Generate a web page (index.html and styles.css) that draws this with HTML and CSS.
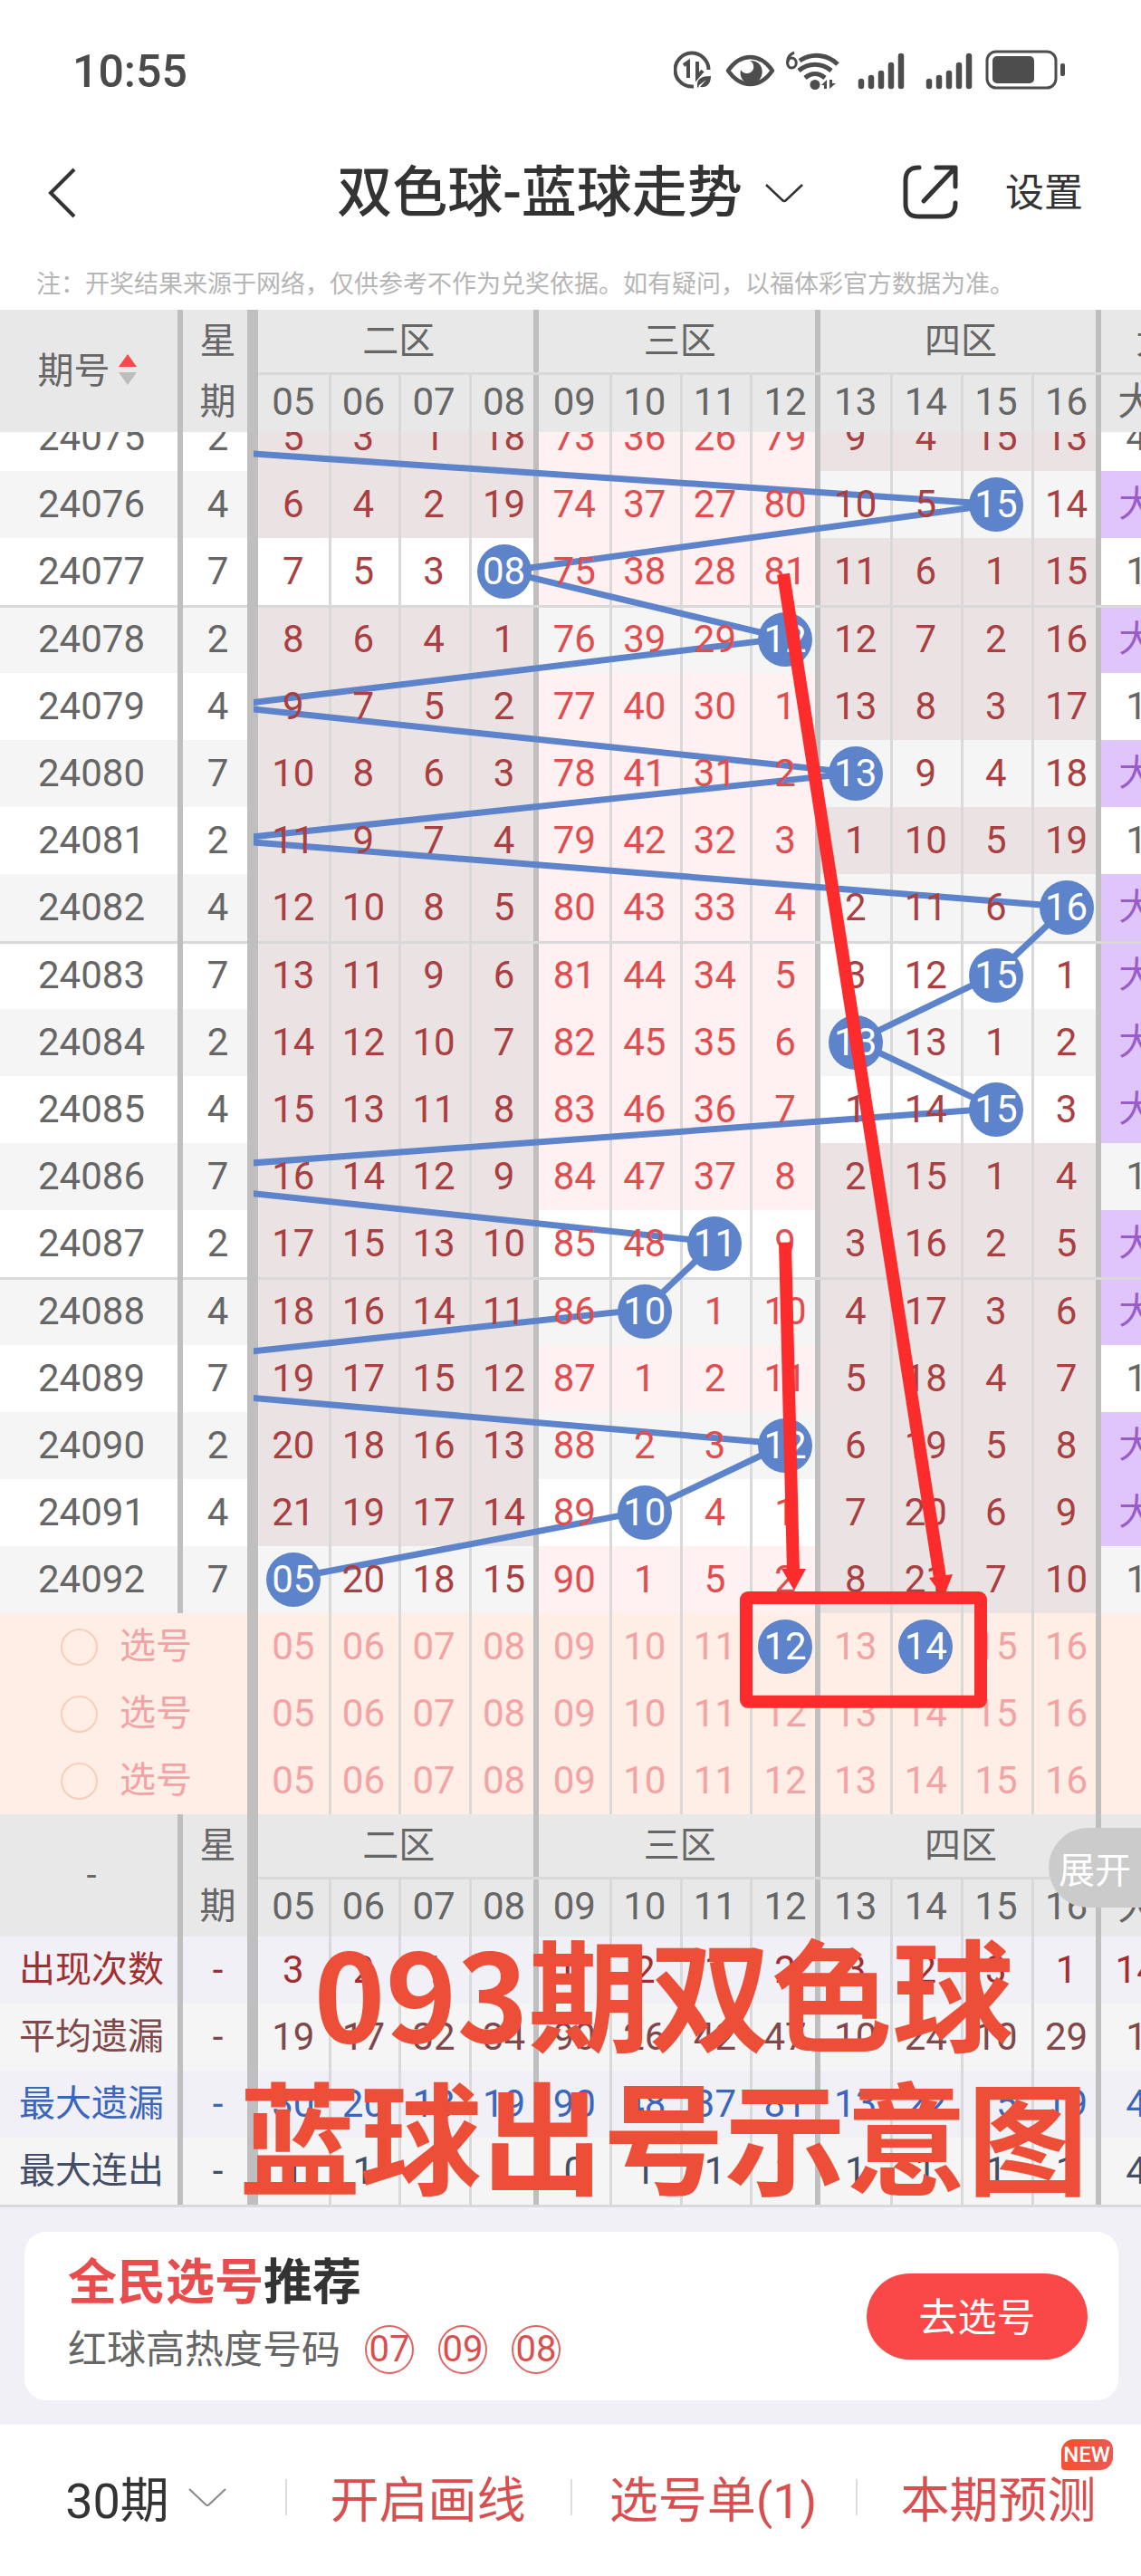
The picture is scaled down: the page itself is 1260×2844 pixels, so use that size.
FILE: index.html
```html
<!DOCTYPE html>
<html lang="zh-CN">
<head>
<meta charset="UTF-8" />
<meta name="viewport" content="width=device-width, initial-scale=1.0" />
<title>双色球-蓝球走势</title>

<link rel="stylesheet" href="styles.css">
</head>
<body>

<!-- STATUS BAR -->
<div class="status">
  <span class="clock">10:55</span>
  <svg class="status-icons" viewBox="0 0 434 48" aria-hidden="true">
    <g fill="none" stroke="#4d4d4d" stroke-width="4">
      <path d="M38.500 22A18.500 18.500 0 1 0 22 40.500"/>
      <path d="M11 17l5-3.500V31"/>
      <path d="M26 13v17l6-7"/>
    </g>
    <path d="M26 41c-1-9 4-12 15-12 0 9-5 13-12 12l7-8-8 6-1 3z" fill="#4d4d4d"/>
    <path d="M60 23c14-20 35-20 49 0-14 20-35 20-49 0z" fill="none" stroke="#4d4d4d" stroke-width="4.500" stroke-linejoin="round"/>
    <path d="M84 12c18-1 18 24 2 25-9 1-14-7-12-15 3 6 12 5 14-1 1-4-1-8-4-9z" fill="#4d4d4d"/>
    <path d="M133 3c-10 4-9 17-3 17 7 0 7-11 0-11-2 0-4 2-4 5" fill="none" stroke="#4d4d4d" stroke-width="3"/>
    <g fill="none" stroke="#4d4d4d" stroke-width="5">
      <path d="M139 12c14-9 31-7 42 4"/>
      <path d="M138 23c11-9 25-9 36 0"/>
      <path d="M145 31c7-6 15-6 22 0"/>
    </g>
    <circle cx="156" cy="38.500" r="5.500" fill="#4d4d4d"/>
    <path d="M163 39l6-6v10h-3v-4zM172 33v10l7-6h-4v-4z" fill="#4d4d4d"/>
    <g stroke="#4d4d4d" stroke-width="6.500" stroke-linecap="round">
      <path d="M207 35v5M218 31v9M229 26v14M240 17v23M251 7v33"/>
      <path d="M282 35v5M293 31v9M304 26v14M315 17v23M326 7v33"/>
    </g>
    <rect x="346" y="2" width="76" height="40" rx="10" fill="none" stroke="#4d4d4d" stroke-width="3"/>
    <rect x="352" y="7" width="46" height="30" rx="5" fill="#4d4d4d"/>
    <rect x="427" y="15" width="5" height="14" rx="2" fill="#4d4d4d"/>
  </svg>
</div>

<!-- NAV BAR -->
<header class="nav">
  <button class="icon-btn" aria-label="返回">
    <svg width="34" height="58" viewBox="0 0 34 58"><path d="M31 3L5 29l26 26" fill="none" stroke="#333" stroke-width="4"/></svg>
  </button>
  <h1 class="title">
    <button class="title-btn">双色球-蓝球走势
      <svg width="44" height="24" viewBox="0 0 44 24"><path d="M2 3l18 17q2 2 4 0L42 3" fill="none" stroke="#333" stroke-width="2.500"/></svg>
    </button>
  </h1>
  <div class="nav-right">
    <button class="icon-btn" aria-label="分享">
      <svg width="64" height="64" viewBox="0 0 64 64" fill="none" stroke="#333" stroke-width="5" stroke-linecap="round" stroke-linejoin="round">
        <path d="M19 4h-1C9 4 4 9 4 18v26c0 9 5 14 14 14h27c9 0 14-5 14-14v-1"/>
        <path d="M38 4h21v21M58 5L24 41"/>
      </svg>
    </button>
    <button class="set-btn">设置</button>
  </div>
</header>
<p class="note">注：开奖结果来源于网络，仅供参考不作为兑奖依据。如有疑问，以福体彩官方数据为准。</p>

<!-- TREND CHART -->
<main class="chart">
  <table class="grid" id="head"></table>
  <div class="window">
    <div class="sheet">
      <table class="grid" id="body"></table>
      <svg class="overlay trend" viewBox="0 0 1014 1991" preserveAspectRatio="none" aria-hidden="true">
        <polyline id="trend" fill="none" stroke="#5d83cb" stroke-width="7"/>
      </svg>
      <svg class="overlay marks" viewBox="0 0 1014 1991" preserveAspectRatio="none" aria-hidden="true">
        <g stroke="#fc2c2c" stroke-width="14" fill="none">
          <path d="M585 188L758 1298"/>
          <path d="M587 927L596 1290"/>
          <rect x="544" y="1320" width="259" height="115" rx="2" stroke-linejoin="round"/>
        </g>
        <path d="M746 1298l26-4-10 26zM583 1288h27l-13 24z" fill="#fc2c2c"/>
      </svg>
    </div>
    <p class="caption">093期双色球<br>蓝球出号示意图</p>
  </div>
  <button class="expand">展开</button>
</main>

<!-- RECOMMEND -->
<section class="recommend">
  <div class="card">
    <div>
      <h2><em>全民选号</em>推荐</h2>
      <p class="hot">红球高热度号码 <span class="hot-ball">07</span><span class="hot-ball">09</span><span class="hot-ball">08</span></p>
    </div>
    <button class="go-btn">去选号</button>
  </div>
</section>

<!-- BOTTOM BAR -->
<footer class="tabs">
  <button class="tab dark">30期
    <svg width="44" height="24" viewBox="0 0 44 24"><path d="M2 3l18 17q2 2 4 0L42 3" fill="none" stroke="#888" stroke-width="2"/></svg>
  </button>
  <button class="tab">开启画线</button>
  <button class="tab">选号单(1)</button>
  <button class="tab"><span class="tab-label">本期预测<span class="new">NEW</span></span></button>
</footer>

<script>
// period, weekday, drawn ball, misses for 05-16, big/small column
const ROWS = [
  ["24075", 2,  1, "5 3 1 18 73 36 26 79 9 4 15 13", "4"],
  ["24076", 4, 15, "6 4 2 19 74 37 27 80 10 5 15 14", "大"],
  ["24077", 7,  8, "7 5 3 08 75 38 28 81 11 6 1 15", "1"],
  ["24078", 2, 12, "8 6 4 1 76 39 29 12 12 7 2 16", "大"],
  ["24079", 4,  4, "9 7 5 2 77 40 30 1 13 8 3 17", "1"],
  ["24080", 7, 13, "10 8 6 3 78 41 31 2 13 9 4 18", "大"],
  ["24081", 2,  4, "11 9 7 4 79 42 32 3 1 10 5 19", "1"],
  ["24082", 4, 16, "12 10 8 5 80 43 33 4 2 11 6 16", "大"],
  ["24083", 7, 15, "13 11 9 6 81 44 34 5 3 12 15 1", "大"],
  ["24084", 2, 13, "14 12 10 7 82 45 35 6 13 13 1 2", "大"],
  ["24085", 4, 15, "15 13 11 8 83 46 36 7 1 14 15 3", "大"],
  ["24086", 7,  2, "16 14 12 9 84 47 37 8 2 15 1 4", "1"],
  ["24087", 2, 11, "17 15 13 10 85 48 11 9 3 16 2 5", "大"],
  ["24088", 4, 10, "18 16 14 11 86 10 1 10 4 17 3 6", "大"],
  ["24089", 7,  1, "19 17 15 12 87 1 2 11 5 18 4 7", "1"],
  ["24090", 2, 12, "20 18 16 13 88 2 3 12 6 19 5 8", "大"],
  ["24091", 4, 10, "21 19 17 14 89 10 4 1 7 20 6 9", "大"],
  ["24092", 7,  5, "05 20 18 15 90 1 5 2 8 21 7 10", "1"]
];
const STATS = [
  ["出现次数", "3 2 1 1 0 2 1 2 3 2 3 1", "14"],
  ["平均遗漏", "19 17 32 34 90 26 42 47 10 24 10 29", "1"],
  ["最大遗漏", "30 20 18 19 90 48 37 81 13 22 15 19", "4"],
  ["最大连出", "1 1 1 1 0 1 1 1 1 1 1 1", "4"]
];
const BALLS = "05 06 07 08 09 10 11 12 13 14 15 16".split(" ");
const PICKED = ["12", "14"];

const COLS = '<colgroup><col class="c-period"><col class="c-week">' + '<col>'.repeat(13) + '</colgroup>';
const zone = i => "z" + (Math.floor(i / 4) + 2);
const colCls = i => (i % 4 ? "line" : "") + (i % 4 === 3 ? " zone-end" : "");

function headRows(first){
  return `<tr class="hd hd-top"><th rowspan="2" class="period">${first}</th><th rowspan="2" class="week">星<br>期</th>` +
    ["二区", "三区", "四区"].map(z => `<th colspan="4" class="zone-end">${z}</th>`).join("") +
    `<th class="edge">大小</th></tr><tr class="hd hd-num">` +
    BALLS.map((b, i) => `<th class="${colCls(i)}">${b}</th>`).join("") + `<th>大</th></tr>`;
}

function chartRow([no, week, ball, vals, size], r){
  const sep = r > 2 && (r - 3) % 5 === 0;
  const cells = vals.split(" ").map((v, i) => {
    const hit = ball === i + 5;
    const quiet = ball < 5 || Math.floor((ball - 5) / 4) !== Math.floor(i / 4);
    return `<td class="${zone(i)} ${colCls(i)}${quiet ? " quiet" : ""}"><span class="${hit ? "ball" : "n"}">${v}</span></td>`;
  }).join("");
  return `<tr class="${r % 2 ? "odd" : ""}${sep ? " sep" : ""}"><td class="period">${no}</td><td class="week">${week}</td>${cells}` +
    `<td class="${size === "大" ? "big" : ""}">${size}</td></tr>`;
}

function pickRow(p){
  const cells = BALLS.map((b, i) =>
    `<td class="${colCls(i)}"><span class="${p === 1 && PICKED.includes(b) ? "ball" : "n"}">${b}</span></td>`).join("");
  return `<tr class="pick"><td colspan="2" class="pick-name"><label><input type="radio" name="pick" value="${p}"> 选号</label></td>${cells}<td></td></tr>`;
}

function statRow([name, vals, last], s){
  return `<tr class="stat s${s + 1}"><td class="period">${name}</td><td class="week">-</td>` +
    vals.split(" ").map((v, i) => `<td class="${colCls(i)}">${v}</td>`).join("") + `<td>${last}</td></tr>`;
}

document.getElementById("head").innerHTML = COLS +
  headRows('期号 <svg width="20" height="34" viewBox="0 0 20 34"><path d="M10 0l10 14H0z" fill="#f84a4a"/><path d="M10 34L0 20h20z" fill="#bdbdbd"/></svg>');
document.getElementById("body").innerHTML = COLS +
  ROWS.map(chartRow).join("") + [1, 2, 3].map(pickRow).join("") + headRows("-") + STATS.map(statRow).join("");

// join the drawn balls, one point per row
let y = 0;
const points = ROWS.map((row, r) => {
  const p = [Math.round(5 + (row[2] - 4.5) * 1009 / 13), y + 37];
  y += r > 2 && (r - 3) % 5 === 0 ? 75 : 74;
  return p.join(",");
});
document.getElementById("trend").setAttribute("points", points.join(" "));
</script>
</body>
</html>
```
FILE: styles.css
```css
:root{--red:#d94f4f;--ball:#5d83cb;--rule:#d9d9d9;--bar:#bfbfbf;--soft:#f1f0f6;}
*{box-sizing:border-box;}
body{
  margin:0;background:#fff;color:#333;
  font-family:Roboto,"Noto Sans CJK SC",sans-serif;
}
button{border:none;background:none;padding:0;margin:0;font:inherit;color:inherit;cursor:pointer;}
svg{flex:none;}
p,h1,h2{margin:0;}

/* status bar ---------------------------------------------- */
.status{display:flex;justify-content:space-between;align-items:center;height:158px;padding:0 82px 0 80px;}
.clock{font-size:50px;font-weight:500;color:#4a4a4a;}
.status-icons{width:434px;height:48px;}

/* nav bar ------------------------------------------------- */
.nav{display:flex;align-items:center;justify-content:space-between;height:110px;padding:0 64px 0 51px;position:relative;}
.icon-btn{display:flex;}
.title{position:absolute;left:0;right:0;text-align:center;font-size:61px;font-weight:500;line-height:80px;pointer-events:none;}
.title-btn{display:inline-flex;align-items:center;gap:24px;pointer-events:auto;}
.nav-right{display:flex;align-items:center;gap:50px;}
.set-btn{font-size:43px;line-height:56px;}
.note{padding:0 40px;height:74px;line-height:92px;font-size:27px;color:#b5b5b5;white-space:nowrap;overflow:hidden;}

/* chart --------------------------------------------------- */
.chart{position:relative;overflow:hidden;border-bottom:3px solid var(--rule);}
.grid{
  width:calc(100% + 34px);table-layout:fixed;border-collapse:collapse;
  font-size:42px;color:#666;text-align:center;
}
.c-period{width:202px;}
.c-week{width:83px;}
.grid td,.grid th{
  --left:inset 0 0 transparent;--right:inset 0 0 transparent;--top:inset 0 0 transparent;
  padding:0;height:74px;line-height:74px;font-weight:400;white-space:nowrap;
  box-shadow:var(--top),var(--left),var(--right);
}
.grid .line{--left:inset 3px 0 var(--rule);}
.grid .zone-end{--right:inset -6px 0 var(--bar);}
.grid .period{--right:inset -6px 0 var(--bar);box-shadow:var(--right),var(--top);}
.grid .week{--right:inset -12px 0 var(--bar);padding-right:6px;box-shadow:var(--right),var(--top);}

.grid .hd th{background:#e8e8e8;}
.grid .hd-top th{height:69px;line-height:69px;font-size:40px;}
.grid .hd-top .week{line-height:67px;}
.grid .hd-num th{height:66px;line-height:66px;--top:inset 0 3px var(--rule);}
.grid .hd .edge{text-align:left;padding-left:38px;}
.grid .period svg{vertical-align:-2px;margin-right:9px;}

.window{overflow:hidden;position:relative;}
.sheet{position:relative;margin-top:-31px;}
.odd{background:#f5f5f5;}
.grid .sep td{height:75px;--top:inset 0 3px var(--rule);}
.grid .z2,.grid .z4{color:#a93f41;}
.grid .z3{color:#e04d4f;}
.grid .quiet{background:#eae2e3;}
.grid .z3.quiet{background:#fff0f1;}
.grid .big{background:#e0c5fb;color:#9a5cc8;font-size:40px;}
.n,.ball{position:relative;z-index:2;}
.ball{
  display:inline-block;width:60px;height:60px;line-height:60px;margin-top:7px;
  border-radius:50%;background:var(--ball);color:#fff;vertical-align:top;
}

.grid .pick td{background:#ffeee6;color:#f3a3a3;}
.grid .pick .pick-name{text-align:left;padding-left:67px;--right:inset -12px 0 var(--bar);font-size:40px;}
.pick-name label{display:flex;align-items:center;gap:24px;height:74px;}
.pick-name input{appearance:none;width:41px;height:41px;margin:0;border:2px solid #f8cdb9;border-radius:50%;}

.grid .stat td{background:var(--soft);}
.grid .stat .period{font-size:40px;}
.grid .s2 td,.grid .s4 td{background:#f5f5f5;}
.s1{color:#a12f31;}
.s2{color:#80484a;}
.s3{color:#3a66bd;}
.s4{color:#434e66;}

.overlay{position:absolute;left:280px;top:0;width:calc(100% - 246px);height:100%;pointer-events:none;}
.trend{z-index:1;}
.marks{z-index:3;}
.caption{
  position:absolute;left:206px;right:0;bottom:0;z-index:4;pointer-events:none;
  text-align:center;font-family:"Noto Sans CJK SC",sans-serif;
  font-size:134px;font-weight:700;line-height:158px;color:#ec4e38;white-space:nowrap;
}
.expand{
  position:absolute;right:0;bottom:328px;z-index:5;width:102px;height:88px;
  border-radius:44px 0 0 44px;background:#cbcbcb;color:#fff;font-size:40px;
}

/* recommend ----------------------------------------------- */
.recommend{padding:27px 25px 27px 27px;background:var(--soft);}
.card{
  display:flex;align-items:center;justify-content:space-between;height:186px;
  padding:0 34px 0 48px;border-radius:24px;background:#fff;
}
.card h2{font-size:54px;font-weight:700;line-height:74px;}
.card em{font-style:normal;color:#e84c4c;}
.hot{display:flex;align-items:center;gap:27px;font-size:43px;line-height:72px;color:#666;}
.hot-ball{
  width:54px;height:54px;border:2px solid #dc6664;border-radius:50%;
  font-size:40px;line-height:50px;text-align:center;color:var(--red);
}
.go-btn{width:244px;height:95px;padding-bottom:4px;border-radius:48px;background:#fa4848;color:#fff;font-size:43px;}

/* bottom bar ---------------------------------------------- */
.tabs{display:grid;grid-template-columns:repeat(4,1fr);height:167px;padding-bottom:8px;background:#fff;}
.tab{
  position:relative;display:flex;align-items:center;justify-content:center;gap:20px;
  font-size:54px;color:var(--red);
}
.tab.dark{padding-left:8px;color:#333;}
.tab + .tab::before{content:"";position:absolute;left:0;width:2px;height:40px;background:#ddd;}
.tab-label{position:relative;}
.new{
  position:absolute;right:-18px;top:-24px;width:57px;height:34px;line-height:34px;
  border-radius:14px 10px 14px 4px;background:linear-gradient(100deg,#f9502a,#e85a56);
  color:#fff;font-size:24px;font-weight:500;text-align:center;
}
```
